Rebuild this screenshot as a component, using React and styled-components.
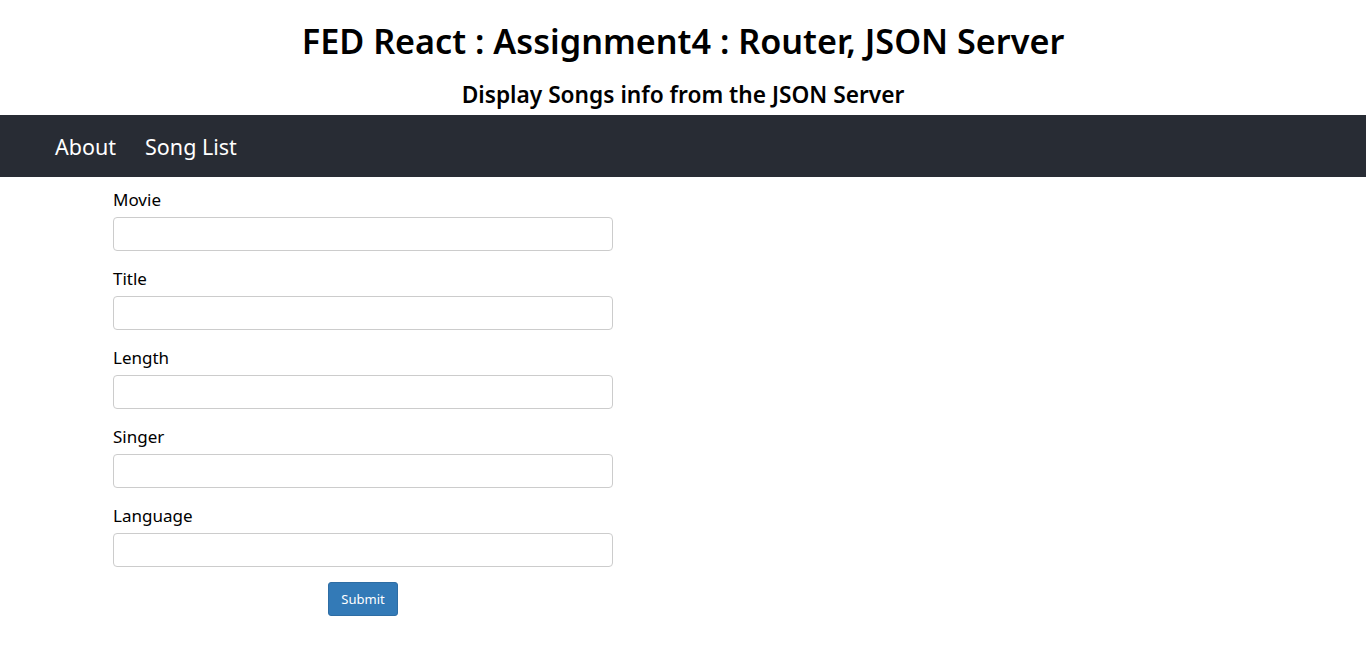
import React from 'react';
import styled, {createGlobalStyle} from 'styled-components';

const GlobalStyle = createGlobalStyle`
  body {
    margin: 0;
    background: #fff;
    font-family: 'Noto Sans', 'Open Sans', sans-serif;
    color: #000;
  }
`;

const fields = ['Movie', 'Title', 'Length', 'Singer', 'Language'];

export default function App() {
  return (
    <>
      <GlobalStyle />
      <Header>
        <Title>FED React : Assignment4 : Router, JSON Server</Title>
        <SubTitle>Display Songs info from the JSON Server</SubTitle>
      </Header>
      <NavBar>
        <NavLink href="#">About</NavLink>
        <NavLink href="#">Song List</NavLink>
      </NavBar>
      <Form onSubmit={e => e.preventDefault()}>
        {fields.map(f => (
          <FormGroup key={f}>
            <Label>{f}</Label>
            <Input type="text" />
          </FormGroup>
        ))}
        <ButtonRow>
          <Button type="submit">Submit</Button>
        </ButtonRow>
      </Form>
    </>
  );
}

const Header = styled.header`
  text-align: center;
  padding-top: 19px;
`;

const Title = styled.h1`
  margin: 0;
  font-size: 34.2px;
  font-weight: 600;
  line-height: 44px;
`;

const SubTitle = styled.h3`
  margin: 17px 0 0;
  font-size: 22.7px;
  font-weight: 600;
  line-height: 30px;
`;

const NavBar = styled.nav`
  margin-top: 5px;
  height: 62px;
  background: #282c34;
  display: flex;
  align-items: center;
  padding-left: 55px;
  gap: 29px;
`;

const NavLink = styled.a`
  color: #fff;
  text-decoration: none;
  font-size: 21.5px;
`;

const Form = styled.form`
  width: 500px;
  margin: 10px 0 0 113px;
`;

const FormGroup = styled.div`
  display: flex;
  flex-direction: column;
  margin-bottom: 15px;
`;

const Label = styled.label`
  font-size: 17px;
  font-weight: 400;
  line-height: 25px;
  margin-bottom: 5px;
`;

const Input = styled.input`
  box-sizing: border-box;
  height: 34px;
  width: 100%;
  border: 1px solid #ccc;
  border-radius: 4px;
  padding: 6px 12px;
  font-size: 14px;
`;

const ButtonRow = styled.div`
  display: flex;
  justify-content: center;
  margin-top: 4px;
`;

const Button = styled.button`
  width: 70px;
  height: 34px;
  background: #337ab7;
  border: 1px solid #2e6da4;
  border-radius: 3px;
  color: #fff;
  font-family: inherit;
  font-size: 13px;
  cursor: pointer;
`;
